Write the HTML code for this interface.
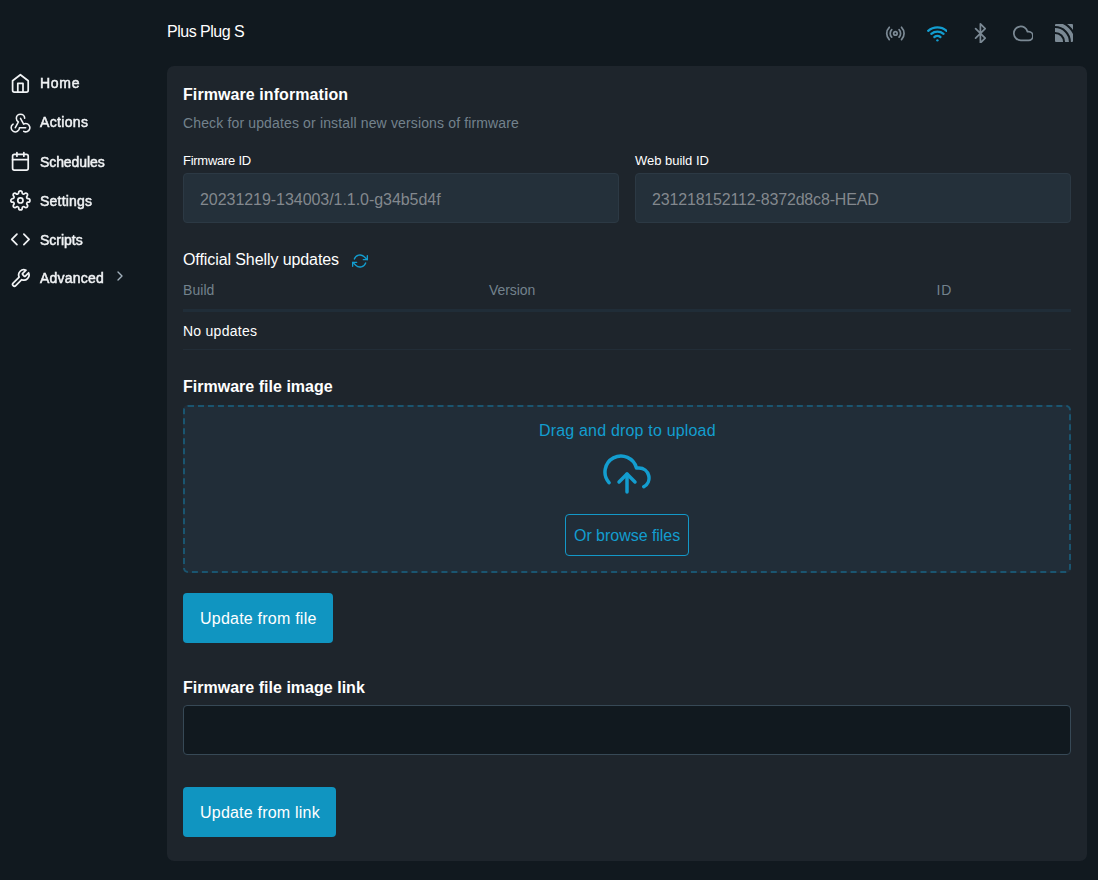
<!DOCTYPE html>
<html lang="en">
<head>
<meta charset="utf-8">
<title>Plus Plug S</title>
<style>
*{box-sizing:border-box;margin:0;padding:0}
html,body{width:1098px;height:880px;overflow:hidden;background:#11191f}
body{position:relative;font-family:"Liberation Sans",sans-serif;color:#edf0f3;font-size:16px}
.abs{position:absolute;white-space:nowrap;line-height:1}
svg{display:block}
.ico{position:absolute;width:20.8px;height:20.8px;fill:none;stroke:currentColor;stroke-width:2;stroke-linecap:round;stroke-linejoin:round}
nav{position:absolute;left:0;top:0;width:160px;height:880px;will-change:transform}
nav .ico{left:10px;color:#f1f3f5}
.st{color:#7b8994}
.pri{color:#139dcf}
.card{position:absolute;left:167px;top:66px;width:920px;height:795px;background:#1e252c;border-radius:7px}
.inp{position:absolute;height:50px;border-radius:4px}
.inp.dis{background:#24303a;border:1px solid #2c3944}
.inp.en{background:#11191f;border:1px solid #374956}
.btn{position:absolute;background:#1095c1;border-radius:4px;height:50px}
.drop{position:absolute;left:183px;top:405px;width:888px;height:168px;background:#212d38;border-radius:5px;border:2px dashed #1a5570}
</style>
</head>
<body>


<!-- status icons -->
<svg class="ico st" style="left:884.800px;top:22.600px" viewBox="0 0 24 24"><circle cx="12" cy="12" r="2"/><path d="M16.240 7.760a6 6 0 0 1 0 8.490m-8.480-.010a6 6 0 0 1 0-8.490m11.310-2.820a10 10 0 0 1 0 14.140m-14.140 0a10 10 0 0 1 0-14.140"/></svg>
<svg class="ico pri" style="left:926.600px;top:23px;stroke-width:2.700" viewBox="0 0 24 24"><path d="M5 12.550a11 11 0 0 1 14.080 0"/><path d="M1.420 9a16 16 0 0 1 21.160 0"/><path d="M8.530 16.110a6 6 0 0 1 6.950 0"/><line x1="12" y1="20" x2="12.010" y2="20"/></svg>
<svg class="ico st" style="left:969.650px;top:22.650px" viewBox="0 0 24 24"><polyline points="6.500 6.500 17.500 17.500 12 23 12 1 17.500 6.500 6.500 17.500"/></svg>
<svg class="ico st" style="left:1012.500px;top:22.600px" viewBox="0 0 24 24"><path d="M18 10h-1.260A8 8 0 1 0 9 20h9a5 5 0 0 0 0-10z"/></svg>
<svg style="position:absolute;left:1055px;top:24px;width:18px;height:18px" viewBox="0 0 18 18"><rect width="18" height="18" rx="1" fill="#7b8994"/><g fill="none" stroke="#11191f" stroke-width="2"><circle cx="0" cy="18" r="9.100"/><circle cx="0" cy="18" r="14.900"/><circle cx="0" cy="18" r="20.600"/></g></svg>

<div class="card"></div>

<div class="inp dis" style="left:183px;top:173px;width:436px"></div>
<div class="inp dis" style="left:635px;top:173px;width:436px"></div>

<svg class="ico pri" style="left:352px;top:253px;width:16px;height:16px" viewBox="0 0 24 24"><polyline points="23 4 23 10 17 10"/><polyline points="1 20 1 14 7 14"/><path d="M3.510 9a9 9 0 0 1 14.850-3.360L23 10M1 14l4.640 4.360A9 9 0 0 0 20.490 15"/></svg>

<div style="position:absolute;left:183px;top:309px;width:888px;height:3px;background:#202d38"></div>
<div style="position:absolute;left:183px;top:349px;width:888px;height:1px;background:#222d37"></div>

<div class="drop"></div>
<svg class="ico pri" style="left:603px;top:450px;width:48px;height:48px;stroke-width:1.750" viewBox="0 0 24 24"><polyline points="16 16 12 12 8 16"/><line x1="12" y1="12" x2="12" y2="21"/><path d="M20.390 18.390A5 5 0 0 0 18 9h-1.260A8 8 0 1 0 3 16.300"/></svg>
<div style="position:absolute;left:565px;top:514px;width:124px;height:42px;border:1px solid #1398c8;border-radius:4px"></div>

<div class="btn" style="left:183px;top:593px;width:150px"></div>
<div class="inp en" style="left:183px;top:705px;width:888px"></div>
<div class="btn" style="left:183px;top:787px;width:153px"></div>

<div class="abs" id="ti" style="left:167px;top:24.00px;font-size:16px;color:#ffffff;letter-spacing:-0.493px;">Plus Plug S</div>
<div class="abs" id="h1" style="left:183px;top:87.00px;font-size:16px;color:#ffffff;font-weight:700;letter-spacing:0.082px;">Firmware information</div>
<div class="abs" id="su" style="left:183px;top:116.00px;font-size:14px;color:#73828c;letter-spacing:0.145px;">Check for updates or install new versions of firmware</div>
<div class="abs" id="l1" style="left:183px;top:154.00px;font-size:13px;color:#ffffff;letter-spacing:-0.266px;">Firmware ID</div>
<div class="abs" id="l2" style="left:635px;top:154.00px;font-size:13px;color:#ffffff;letter-spacing:-0.030px;">Web build ID</div>
<div class="abs" id="v1" style="left:200px;top:192.00px;font-size:16px;color:#858a8f;opacity:.99;letter-spacing:-0.048px;">20231219-134003/1.1.0-g34b5d4f</div>
<div class="abs" id="v2" style="left:652px;top:192.00px;font-size:16px;color:#858a8f;opacity:.99;letter-spacing:-0.170px;">231218152112-8372d8c8-HEAD</div>
<div class="abs" id="h2" style="left:183px;top:252.00px;font-size:16px;color:#ffffff;letter-spacing:-0.087px;">Official Shelly updates</div>
<div class="abs" id="t1" style="left:183px;top:283.00px;font-size:14px;color:#73828c;letter-spacing:0.056px;">Build</div>
<div class="abs" id="t2" style="left:489px;top:283.00px;font-size:14px;color:#73828c;letter-spacing:-0.080px;">Version</div>
<div class="abs" id="t3" style="left:936.5px;top:283.00px;font-size:14px;color:#73828c;letter-spacing:0.816px;">ID</div>
<div class="abs" id="nu" style="left:183px;top:324.00px;font-size:14px;color:#ffffff;letter-spacing:0.261px;">No updates</div>
<div class="abs" id="h3" style="left:183px;top:379.00px;font-size:16px;color:#ffffff;font-weight:700;letter-spacing:0.018px;">Firmware file image</div>
<div class="abs" id="dd" style="left:539px;top:423.00px;font-size:16px;color:#139dcf;letter-spacing:0.183px;">Drag and drop to upload</div>
<div class="abs" id="bf" style="left:574px;top:528.00px;font-size:16px;color:#139dcf;letter-spacing:-0.033px;">Or browse files</div>
<div class="abs" id="b1" style="left:200px;top:611.00px;font-size:16px;color:#ffffff;letter-spacing:0.225px;">Update from file</div>
<div class="abs" id="h4" style="left:183px;top:680.00px;font-size:16px;color:#ffffff;font-weight:700;letter-spacing:0.018px;">Firmware file image link</div>
<div class="abs" id="b2" style="left:200px;top:805.00px;font-size:16px;color:#ffffff;letter-spacing:0.212px;">Update from link</div>
<nav>
  <svg class="ico" style="top:72.8px" viewBox="0 0 24 24"><path d="M3 9l9-7 9 7v11a2 2 0 0 1-2 2H5a2 2 0 0 1-2-2z"/><polyline points="9 22 9 12 15 12 15 22"/></svg>
  <svg class="ico" style="left:8.100px;top:109.600px;width:25px;height:25px;stroke-width:1.500" viewBox="0 0 24 24"><path d="M4.876 13.610a4 4 0 1 0 6.124 3.390h6"/><path d="M15.066 20.502a4 4 0 1 0 1.934 -7.502c-.706 0 -1.424 .179 -2 .500l-3 -5.500"/><path d="M16 8a4 4 0 1 0 -8 0c0 1.506 .770 2.818 2 3.500l-3 5.500"/></svg>
  <svg class="ico" style="top:151.200px" viewBox="0 0 24 24"><rect x="3" y="4" width="18" height="18" rx="2" ry="2"/><line x1="16" y1="2" x2="16" y2="6"/><line x1="8" y1="2" x2="8" y2="6"/><line x1="3" y1="10" x2="21" y2="10"/></svg>
  <svg class="ico" style="top:190.100px" viewBox="0 0 24 24"><circle cx="12" cy="12" r="3"/><path d="M19.400 15a1.650 1.650 0 0 0 .33 1.820l.06.06a2 2 0 0 1 0 2.830 2 2 0 0 1-2.830 0l-.06-.06a1.650 1.650 0 0 0-1.820-.33 1.650 1.650 0 0 0-1 1.510V21a2 2 0 0 1-2 2 2 2 0 0 1-2-2v-.09A1.650 1.650 0 0 0 9 19.400a1.650 1.650 0 0 0-1.820.33l-.06.06a2 2 0 0 1-2.830 0 2 2 0 0 1 0-2.830l.06-.06a1.650 1.650 0 0 0 .33-1.820 1.650 1.650 0 0 0-1.510-1H3a2 2 0 0 1-2-2 2 2 0 0 1 2-2h.09A1.650 1.650 0 0 0 4.600 9a1.650 1.650 0 0 0-.33-1.820l-.06-.06a2 2 0 0 1 0-2.830 2 2 0 0 1 2.830 0l.06.06a1.650 1.650 0 0 0 1.820.33H9a1.650 1.650 0 0 0 1-1.510V3a2 2 0 0 1 2-2 2 2 0 0 1 2 2v.09a1.650 1.650 0 0 0 1 1.510 1.650 1.650 0 0 0 1.820-.33l.06-.06a2 2 0 0 1 2.830 0 2 2 0 0 1 0 2.830l-.06.06a1.650 1.650 0 0 0-.33 1.820V9a1.650 1.650 0 0 0 1.510 1H21a2 2 0 0 1 2 2 2 2 0 0 1-2 2h-.09a1.650 1.650 0 0 0-1.510 1z"/></svg>
  <svg class="ico" style="top:228.900px" viewBox="0 0 24 24"><polyline points="16 18 22 12 16 6"/><polyline points="8 6 2 12 8 18"/></svg>
  <svg class="ico" style="top:267.800px" viewBox="0 0 24 24"><path d="M14.700 6.300a1 1 0 0 0 0 1.400l1.600 1.600a1 1 0 0 0 1.400 0l3.770-3.770a6 6 0 0 1-7.940 7.940l-6.910 6.910a2.120 2.120 0 0 1-3-3l6.910-6.910a6 6 0 0 1 7.940-7.940l-3.760 3.760z"/></svg>
  <svg class="ico" style="left:112.100px;top:268px;width:16px;height:16px;color:#a2b0bc" viewBox="0 0 24 24"><polyline points="9 18 15 12 9 6"/></svg>
<div class="abs" id="n1" style="left:40px;top:76.00px;font-size:14px;color:#f1f3f5;-webkit-text-stroke:0.5px #f1f3f5;letter-spacing:0.717px;">Home</div>
<div class="abs" id="n2" style="left:40px;top:115.00px;font-size:14px;color:#f1f3f5;-webkit-text-stroke:0.5px #f1f3f5;letter-spacing:0.333px;">Actions</div>
<div class="abs" id="n3" style="left:40px;top:155.00px;font-size:14px;color:#f1f3f5;-webkit-text-stroke:0.5px #f1f3f5;letter-spacing:-0.094px;">Schedules</div>
<div class="abs" id="n4" style="left:40px;top:194.00px;font-size:14px;color:#f1f3f5;-webkit-text-stroke:0.5px #f1f3f5;letter-spacing:0.209px;">Settings</div>
<div class="abs" id="n5" style="left:40px;top:233.00px;font-size:14px;color:#f1f3f5;-webkit-text-stroke:0.5px #f1f3f5;letter-spacing:-0.020px;">Scripts</div>
<div class="abs" id="n6" style="left:40px;top:271.00px;font-size:14px;color:#f1f3f5;-webkit-text-stroke:0.5px #f1f3f5;letter-spacing:0.201px;">Advanced</div>
</nav>
</body>
</html>
